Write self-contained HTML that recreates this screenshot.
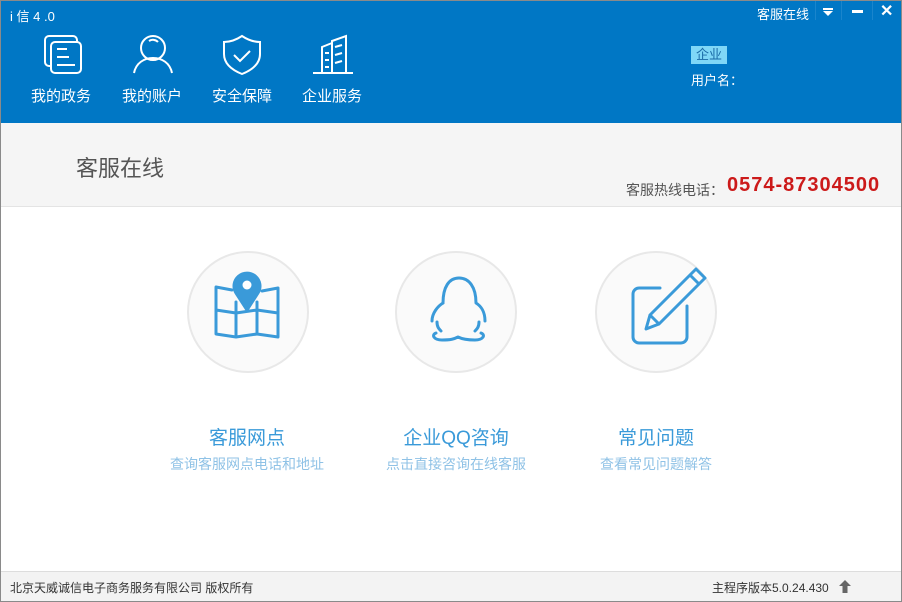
<!DOCTYPE html>
<html><head><meta charset="utf-8"><style>
*{margin:0;padding:0;box-sizing:border-box}
body{width:902px;height:602px;overflow:hidden;font-family:"Liberation Sans","Noto Sans CJK SC",sans-serif;background:#fff;position:relative}
.win{position:absolute;left:0;top:0;width:902px;height:602px;border:1px solid #8a8a8a}
.hdr{position:absolute;left:0;top:0;width:902px;height:123px;background:#0077c5}
.t{position:absolute;color:#fff;white-space:nowrap}
.band{position:absolute;left:1px;top:123px;width:900px;height:84px;background:#f5f5f5;border-bottom:1px solid #e4e4e4}
.c{position:absolute;width:122px;height:122px;border-radius:50%;border:2px solid #e8e8e8;background:#fafafa}
.h{position:absolute;color:#3a9ad9;font-size:19px;width:220px;text-align:center}
.s{position:absolute;color:#8fc2e6;font-size:14px;width:220px;text-align:center}
.ft{position:absolute;left:1px;top:571px;width:900px;height:30px;background:#f3f3f3;border-top:1px solid #ddd;font-size:12px;color:#333}
</style></head><body>
<div class="hdr">
<div class="t" style="left:10px;top:6px;font-size:13px">i 信 4 .0</div>
<div class="t" style="left:757px;top:4px;font-size:13px">客服在线</div>
<div style="position:absolute;left:815px;top:0;width:1px;height:20px;background:#1a85cc"></div>
<div style="position:absolute;left:841px;top:0;width:1px;height:20px;background:#1a85cc"></div>
<div style="position:absolute;left:872px;top:0;width:1px;height:20px;background:#1a85cc"></div>
<div style="position:absolute;left:823px;top:8px;width:10px;height:2px;background:#fff"></div>
<div style="position:absolute;left:823px;top:11px;width:0;height:0;border-left:5px solid transparent;border-right:5px solid transparent;border-top:5px solid #fff"></div>
<div style="position:absolute;left:852px;top:10px;width:11px;height:3px;background:#fff"></div>
<div class="t" style="left:880px;top:1px;font-size:16px;font-weight:bold">✕</div>
<div style="position:absolute;left:691px;top:46px;width:36px;height:18px;background:#7fd7f7;color:#1a6aa6;font-size:13px;text-align:center;line-height:18px">企业</div>
<div class="t" style="left:691px;top:70px;font-size:13px">用户名：</div>
<svg style="position:absolute;left:40px;top:33px" width="44" height="42" fill="none" stroke="#fff" stroke-width="2"><rect x="5" y="3" width="32" height="30" rx="4"/><rect x="11" y="9" width="30" height="31" rx="4" fill="#0077c5"/><path d="M17 16h10M17 24h12M17 32h18"/></svg>
<svg style="position:absolute;left:130px;top:33px" width="46" height="42" fill="none" stroke="#fff" stroke-width="2"><circle cx="23" cy="15" r="12"/><path d="M19 8a7 7 0 0 1 9 1"/><path d="M4 40c2-10 10-15 19-15s17 5 19 15"/></svg>
<svg style="position:absolute;left:220px;top:33px" width="44" height="42" fill="none" stroke="#fff" stroke-width="2"><path d="M22 3c6 4 12 6 18 6v12c0 10-8 16-18 20C12 37 4 31 4 21V9c6 0 12-2 18-6z"/><path d="M14 22l6 6 10-10"/></svg>
<svg style="position:absolute;left:310px;top:33px" width="44" height="42" fill="none" stroke="#fff" stroke-width="2"><path d="M3 40h40M12 40V14l10-4M22 40V8l14-5v37"/><path d="M15 20h4M15 27h4M15 34h4M25 14l7-2M25 22l7-2M25 30l7-2"/></svg>
<div class="t" style="left:31px;top:85px;font-size:15px">我的政务</div>
<div class="t" style="left:122px;top:85px;font-size:15px">我的账户</div>
<div class="t" style="left:212px;top:85px;font-size:15px">安全保障</div>
<div class="t" style="left:302px;top:85px;font-size:15px">企业服务</div>
</div>
<div class="band">
<div style="position:absolute;left:75px;top:28px;font-size:22px;color:#555">客服在线</div>
<div style="position:absolute;left:625px;top:57px;font-size:14px;color:#555">客服热线电话：</div>
<div style="position:absolute;left:726px;top:51px;font-size:20px;font-weight:bold;color:#cc1a1a;letter-spacing:1px">0574-87304500</div>
</div>
<div class="c" style="left:187px;top:251px"></div>
<div class="c" style="left:395px;top:251px"></div>
<div class="c" style="left:595px;top:251px"></div>
<svg style="position:absolute;left:0;top:0" width="902" height="602" fill="none" stroke="#3a9ad9" stroke-width="3" stroke-linejoin="round" stroke-linecap="round">
<path d="M232 290L216 287L216 334L236 337L257 334L278 337L278 288L262 291 M216 310L236 313L257 310L278 313M236 302V337M257 302V334"/>
<path d="M247 310L236 293a13 13 0 1 1 22 0z" fill="#3a9ad9"/><circle cx="247" cy="285" r="4.5" fill="#fff" stroke="none"/>
<path d="M443 303c0-16 6-25 16-25s17 9 17 25c5 3 9 9 9 18"/>
<path d="M443 303c-5 3-11 10-11 18M437 322c0 5 2 7 4 9M479 322c0 5-2 7-4 9"/>
<path d="M436 333c-5 2-2 7 6 7 9 0 12-1 16-3 4 2 8 3 17 3 8 0 11-5 6-7"/>
<path d="M660 288h-21a6 6 0 0 0-6 6v43a6 6 0 0 0 6 6h42a6 6 0 0 0 6-6V306"/>
<path d="M646 329l4-14 46-46 9 9-46 46z M690 275l9 9M650 315l9 9"/>
</svg>
<div class="h" style="left:137px;top:423px">客服网点</div>
<div class="s" style="left:137px;top:454px">查询客服网点电话和地址</div>
<div class="h" style="left:346px;top:423px">企业QQ咨询</div>
<div class="s" style="left:346px;top:454px">点击直接咨询在线客服</div>
<div class="h" style="left:546px;top:423px">常见问题</div>
<div class="s" style="left:546px;top:454px">查看常见问题解答</div>
<div class="ft">
<div style="position:absolute;left:9px;top:7px">北京天威诚信电子商务服务有限公司 版权所有</div>
<div style="position:absolute;left:711px;top:7px">主程序版本5.0.24.430</div>
<svg style="position:absolute;left:838px;top:8px" width="12" height="13"><path d="M6 0L12 6H8.5V13h-5V6H0z" fill="#666"/></svg>
</div>
<div class="win"></div>
</body></html>
